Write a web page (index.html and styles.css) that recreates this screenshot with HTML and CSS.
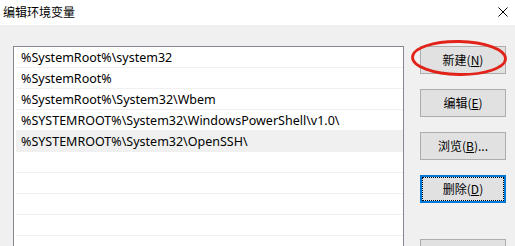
FILE: index.html
```html
<!DOCTYPE html>
<html lang="zh-CN">
<head>
    <meta charset="UTF-8">
    <title>编辑环境变量</title>
    <link rel="stylesheet" href="styles.css">
</head>
<body>
    <div class="dialog">
        <div class="titlebar">
            <span class="title">编辑环境变量</span>
            <svg class="close" width="10" height="10" viewBox="0 0 10 10">
                <path d="M0.5 0.5 L9.5 9.5 M9.5 0.5 L0.5 9.5" stroke="#000" stroke-width="1"/>
            </svg>
        </div>
        <div class="content">
            <div class="path-list">
                <div class="row">%SystemRoot%\system32</div>
                <div class="row">%SystemRoot%</div>
                <div class="row">%SystemRoot%\System32\Wbem</div>
                <div class="row">%SYSTEMROOT%\System32\WindowsPowerShell\v1.0\</div>
                <div class="row selected">%SYSTEMROOT%\System32\OpenSSH\</div>
                <div class="row"></div>
                <div class="row"></div>
                <div class="row"></div>
                <div class="row"></div>
            </div>
            <div class="buttons">
                <button class="btn">新建(<u>N</u>)</button>
                <button class="btn">编辑(<u>E</u>)</button>
                <button class="btn">浏览(<u>B</u>)...</button>
                <button class="btn focused">删除(<u>D</u>)</button>
                <button class="btn spaced"></button>
            </div>
        </div>
        <!-- red mark drawn over the "new" button -->
        <svg class="mark" width="100" height="40" viewBox="0 0 100 40">
            <ellipse cx="49" cy="19" rx="46.5" ry="16.5" fill="none" stroke="#e2231a" stroke-width="2.8" transform="rotate(1 49 19)"/>
        </svg>
    </div>
</body>
</html>
```

FILE: styles.css
```css
body {
    margin: 0;
    font-family: "Noto Sans", "Noto Sans CJK SC", sans-serif;
    font-size: 12.5px;
    color: #000;
}

.dialog {
    position: relative;
    width: 515px;
    height: 246px;
    overflow: hidden;
    background: #f0f0f0;
}

.titlebar {
    height: 25px;
    background: #fff;
    display: flex;
    align-items: center;
    justify-content: space-between;
    padding: 0 6px 2px 3px;
    box-sizing: border-box;
}

.title {
    font-family: "Noto Sans CJK SC", sans-serif;
    font-size: 12px;
    line-height: 14px;
}

.close {
    display: block;
    margin-right: 1px;
}

.content {
    display: flex;
    align-items: flex-start;
    gap: 16px;
    padding: 21px 0 0 13px;
}

.path-list {
    width: 391px;
    height: 240px;
    box-sizing: border-box;
    border: 1px solid #828790;
    background: #fff;
    padding-left: 2px;
}

.row {
    height: 20px;
    line-height: 21px;
    border-bottom: 1px solid #f0f0f0;
    padding-left: 5px;
    white-space: nowrap;
}

.row.selected {
    background: #f0f0f0;
}

.buttons {
    display: flex;
    flex-direction: column;
    gap: 15px;
}

.btn {
    width: 86px;
    height: 28px;
    box-sizing: border-box;
    border: 1px solid #adadad;
    background: #e1e1e1;
    font-family: "Noto Sans CJK SC", sans-serif;
    font-size: 12px;
    color: #000;
    padding: 0;
    line-height: 14px;
}

.btn u {
    text-underline-offset: 1px;
}

.btn.focused {
    border: 2px solid #0078d7;
    outline: 1px dotted #000;
    outline-offset: -3px;
}

.btn.spaced {
    margin-top: 21px;
}

.mark {
    position: absolute;
    left: 410px;
    top: 39px;
}
```
